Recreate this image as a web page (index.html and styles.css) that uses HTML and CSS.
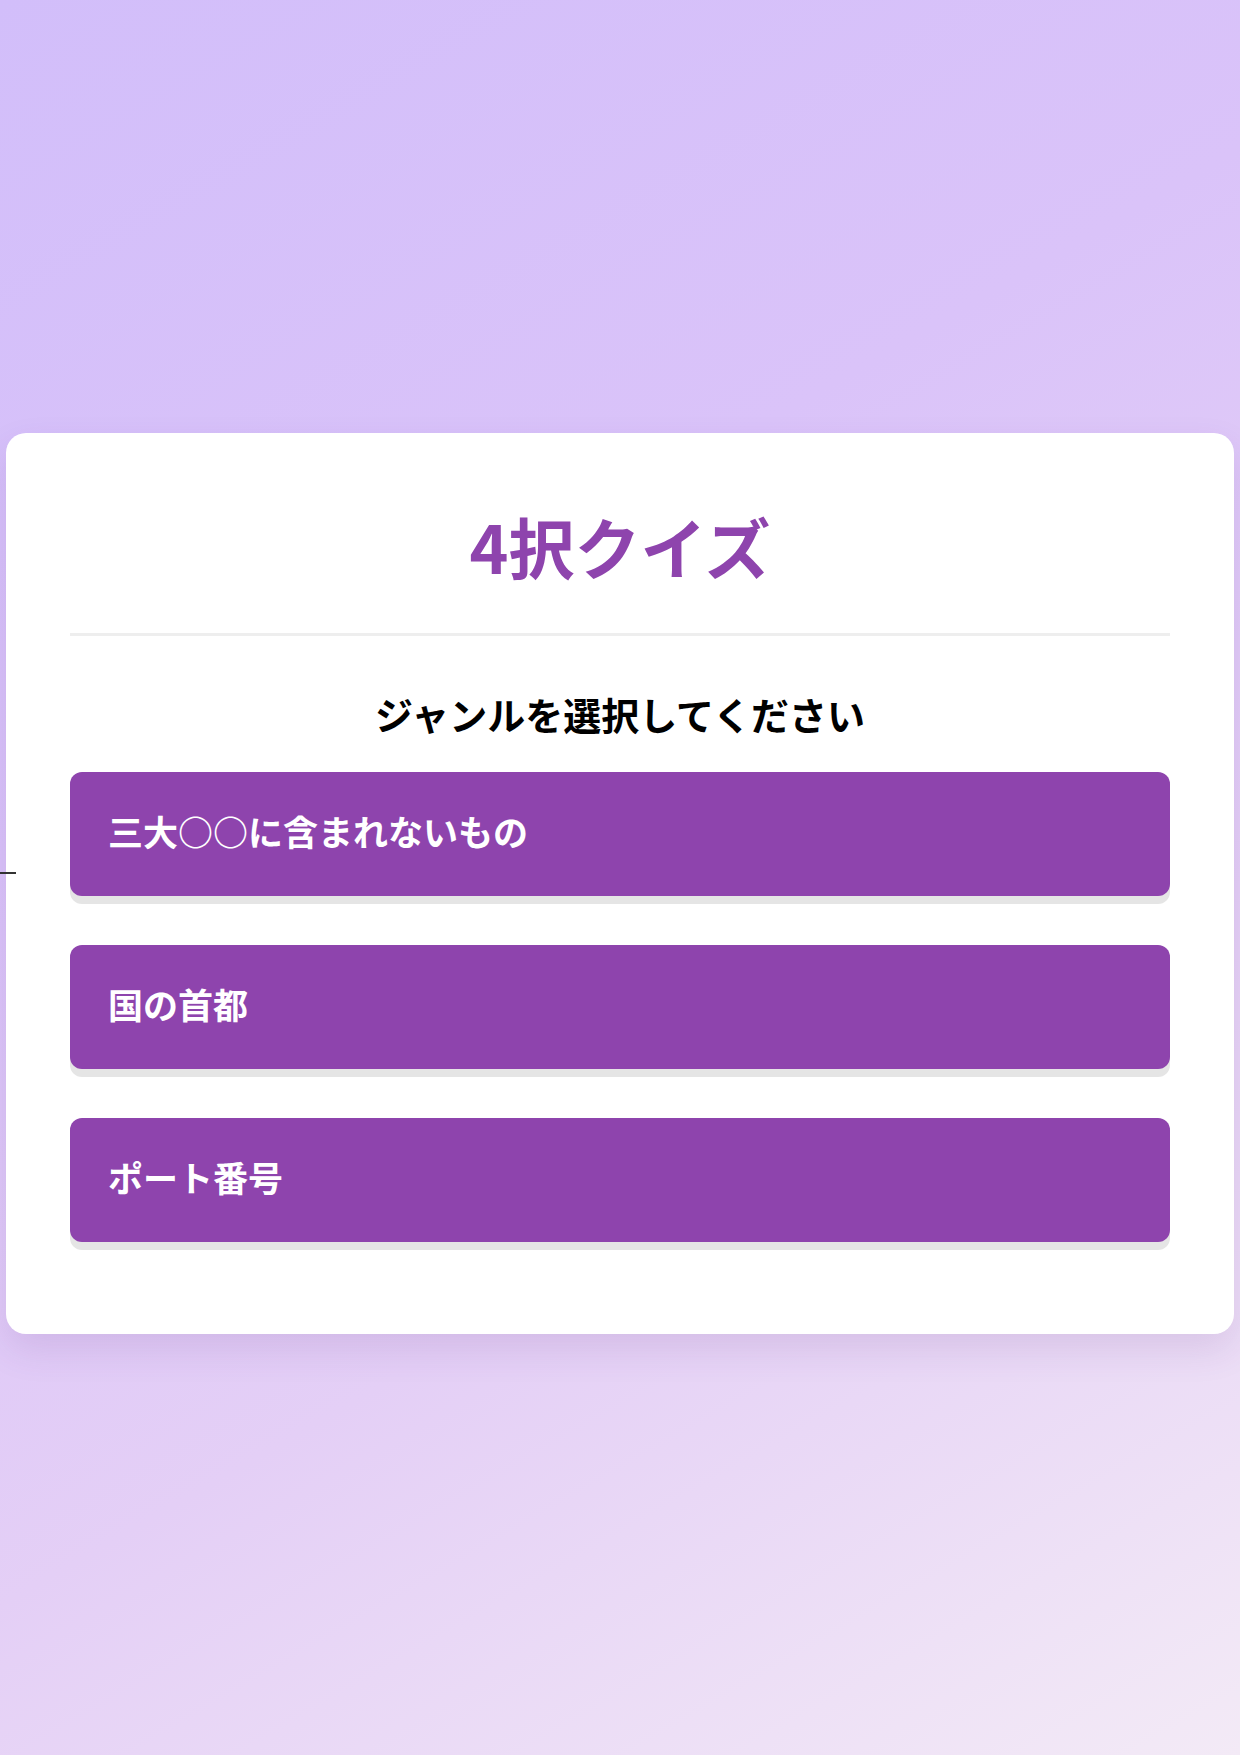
FILE: index.html
```html
<!DOCTYPE html>
<html lang="ja">

<head>
  <meta charset="UTF-8">
  <meta name="viewport" content="width=device-width, initial-scale=1.0">
  <title>4択クイズ</title>
  <link rel="stylesheet" href="styles.css">
</head>

<body>
  <div class="page">
    <main class="quiz">
      <h1 class="quiz__title">4択クイズ</h1>
      <h2 class="quiz__lead">ジャンルを選択してください</h2>
      <div class="genres">
        <button class="genre">三大○○に含まれないもの</button>
        <button class="genre">国の首都</button>
        <button class="genre">ポート番号</button>
      </div>
    </main>
  </div>
  <div class="stray"></div>
</body>

</html>
```

FILE: styles.css
```css
html {
  font-size: 16px;
}

body {
  margin: 0;
  min-height: 100vh;
  background: linear-gradient(150deg, #d2befa 0%, #dac3f9 35%, #e4cff6 65%, #f3eaf6 100%);
}

* {
  font-family: "Noto Sans CJK JP", "Noto Sans", sans-serif;
  box-sizing: border-box;
}

.page {
  align-items: center;
  display: flex;
  justify-content: center;
  min-height: 100vh;
  padding: 12px 6px 0;
}

.quiz {
  background-color: #fff;
  border-radius: 20px;
  box-shadow: 0 16px 36px rgba(90, 40, 130, .12);
  padding: 64px 64px 92px;
  width: 100%;
}

.quiz__title {
  border-bottom: 3px solid #eee;
  color: #8e44ad;
  font-size: 66px;
  font-weight: bold;
  line-height: 96px;
  margin: 0;
  padding-bottom: 40px;
  text-align: center;
}

.quiz__lead {
  color: #000;
  font-size: 38px;
  font-weight: bold;
  line-height: 55px;
  margin: 50px 0 31px;
  text-align: center;
}

.genres {
  display: flex;
  flex-direction: column;
  gap: 49px;
}

.genre {
  appearance: none;
  background-color: #8e44ad;
  border: none;
  border-radius: 12px;
  box-shadow: 0 8px 0 #e5e5e5;
  color: #fff;
  cursor: pointer;
  font-size: 35px;
  font-weight: bold;
  height: 124px;
  line-height: 48px;
  padding: 0 38px 6px;
  text-align: left;
  width: 100%;
}

.stray {
  background-color: #333;
  height: 2px;
  left: 0;
  position: absolute;
  top: 872px;
  width: 16px;
}
```
